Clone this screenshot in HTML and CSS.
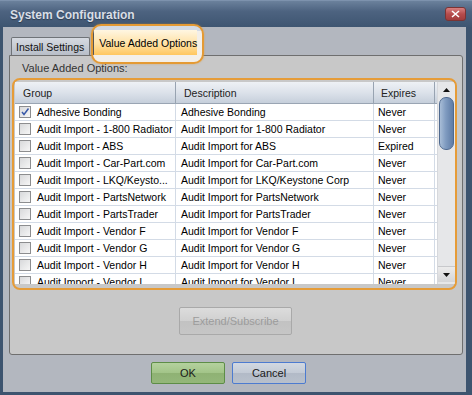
FILE: index.html
```html
<!DOCTYPE html>
<html lang="en">
<head>
  <meta charset="UTF-8" />
  <title>System Configuration</title>
  <link rel="stylesheet" href="styles.css">
</head>
<body>
  <div class="window">
    <div class="titlebar">
      <span class="title">System Configuration</span>
      <button class="close-btn" aria-label="Close">
        <svg width="9" height="8" viewBox="0 0 9 8"><path d="M1 1 L8 7 M8 1 L1 7" stroke="#fff" stroke-width="1.6"/></svg>
      </button>
    </div>

    <div class="client">
      <div class="tabs">
        <div class="tab">Install Settings</div>
        <div class="tab tab-active"><span>Value Added Options</span></div>
      </div>

      <div class="panel">
        <div class="panel-label">Value Added Options:</div>

        <div class="listbox">
          <div class="table">
            <div class="row head">
              <div class="cell">Group</div>
              <div class="cell">Description</div>
              <div class="cell">Expires</div>
              <div class="cell"></div>
            </div>
            <div class="rows">
              <div class="row">
                <div class="cell group"><span class="check checked"><svg width="10" height="10" viewBox="0 0 10 10"><path d="M2 5 L4 7.5 L8.5 1.5" fill="none" stroke="#3a5aa8" stroke-width="1.5"/></svg></span>Adhesive Bonding</div>
                <div class="cell">Adhesive Bonding</div>
                <div class="cell">Never</div>
                <div class="cell"></div>
              </div>
              <div class="row">
                <div class="cell group"><span class="check"></span>Audit Import - 1-800 Radiator</div>
                <div class="cell">Audit Import for 1-800 Radiator</div>
                <div class="cell">Never</div>
                <div class="cell"></div>
              </div>
              <div class="row">
                <div class="cell group"><span class="check"></span>Audit Import - ABS</div>
                <div class="cell">Audit Import for ABS</div>
                <div class="cell">Expired</div>
                <div class="cell"></div>
              </div>
              <div class="row">
                <div class="cell group"><span class="check"></span>Audit Import - Car-Part.com</div>
                <div class="cell">Audit Import for Car-Part.com</div>
                <div class="cell">Never</div>
                <div class="cell"></div>
              </div>
              <div class="row">
                <div class="cell group"><span class="check"></span>Audit Import - LKQ/Keysto...</div>
                <div class="cell">Audit Import for LKQ/Keystone Corp</div>
                <div class="cell">Never</div>
                <div class="cell"></div>
              </div>
              <div class="row">
                <div class="cell group"><span class="check"></span>Audit Import - PartsNetwork</div>
                <div class="cell">Audit Import for PartsNetwork</div>
                <div class="cell">Never</div>
                <div class="cell"></div>
              </div>
              <div class="row">
                <div class="cell group"><span class="check"></span>Audit Import - PartsTrader</div>
                <div class="cell">Audit Import for PartsTrader</div>
                <div class="cell">Never</div>
                <div class="cell"></div>
              </div>
              <div class="row">
                <div class="cell group"><span class="check"></span>Audit Import - Vendor F</div>
                <div class="cell">Audit Import for Vendor F</div>
                <div class="cell">Never</div>
                <div class="cell"></div>
              </div>
              <div class="row">
                <div class="cell group"><span class="check"></span>Audit Import - Vendor G</div>
                <div class="cell">Audit Import for Vendor G</div>
                <div class="cell">Never</div>
                <div class="cell"></div>
              </div>
              <div class="row">
                <div class="cell group"><span class="check"></span>Audit Import - Vendor H</div>
                <div class="cell">Audit Import for Vendor H</div>
                <div class="cell">Never</div>
                <div class="cell"></div>
              </div>
              <div class="row">
                <div class="cell group"><span class="check"></span>Audit Import - Vendor I</div>
                <div class="cell">Audit Import for Vendor I</div>
                <div class="cell">Never</div>
                <div class="cell"></div>
              </div>
            </div>
          </div>

          <div class="scrollbar">
            <div class="arrow"><svg width="7" height="4" viewBox="0 0 7 4"><path d="M0 4 L3.5 0 L7 4 Z" fill="#111"/></svg></div>
            <div class="track">
              <div class="thumb"></div>
            </div>
            <div class="arrow arrow-down"><svg width="7" height="4" viewBox="0 0 7 4"><path d="M0 0 L3.5 4 L7 0 Z" fill="#111"/></svg></div>
          </div>
        </div>

        <div class="panel-actions">
          <button class="btn btn-disabled" disabled>Extend/Subscribe</button>
        </div>
      </div>

      <div class="footer">
        <button class="btn btn-ok">OK</button>
        <button class="btn btn-cancel">Cancel</button>
      </div>
    </div>
  </div>
</body>
</html>
```

FILE: styles.css
```css
body {
  margin: 0;
  font-family: 'Liberation Sans', Arial, sans-serif;
  font-size: 10.5px;
  background: #3d546f;
}

.window {
  width: 472px;
  height: 395px;
  display: flex;
  flex-direction: column;
  background: #3d546f;
  overflow: hidden;
}

.titlebar {
  height: 27px;
  flex-shrink: 0;
  display: flex;
  align-items: center;
  justify-content: space-between;
  padding: 0 6px 0 10px;
  box-sizing: border-box;
  background: linear-gradient(#6b819c, #4d6380 40%, #3e5571);
  border-top: 1px solid #7d92ad;
}

.title {
  color: #d9dee6;
  font-size: 12px;
  font-weight: bold;
  text-shadow: 0 1px 1px rgba(0, 0, 0, 0.35);
  margin-top: 1px;
}

.close-btn {
  width: 21px;
  height: 14px;
  padding: 0;
  margin-top: -1px;
  border: 1px solid #7b3434;
  border-radius: 3px;
  background: linear-gradient(#d88080, #b64c4c 50%, #a23c3c);
  display: flex;
  align-items: center;
  justify-content: center;
}

.client {
  flex: 1;
  margin: 0 6px 3px 3px;
  padding: 0 3px 0 6px;
  background: #b3b7bf;
  display: flex;
  flex-direction: column;
}

.tabs {
  height: 28px;
  display: flex;
  align-items: flex-end;
  padding-left: 2px;
}

.tab {
  height: 18px;
  padding: 0 5px 0 4px;
  box-sizing: border-box;
  display: flex;
  align-items: center;
  color: #111;
  background: linear-gradient(#d6dae1, #b8bec8);
  border: 1px solid #6f7378;
  border-bottom: none;
  border-radius: 2px 2px 0 0;
}

.tab-active {
  position: relative;
  z-index: 1;
  height: 40px;
  width: 113px;
  margin-left: 1px;
  margin-bottom: -9px;
  padding: 0;
  align-items: stretch;
  border: 2px solid #e49a34;
  border-radius: 10px;
  background: linear-gradient(#d3dae4 0, #d3dae4 5px, #f3efe9 5px);
  box-shadow: 0 0 2px rgba(230, 150, 40, 0.6);
  overflow: hidden;
}

.tab-active span {
  display: flex;
  align-items: center;
  height: 25px;
  margin-top: 4px;
  padding-left: 5px;
  border-left: 1px solid #555;
  color: #000;
  background: linear-gradient(#fff6e2, #ffe2a6 55%, #ffc65e);
}

.panel {
  height: 300px;
  box-sizing: border-box;
  border: 1px solid #6f6f6f;
  border-radius: 0 3px 3px 3px;
  background: #c8c8c8;
  padding: 0 0 0 2px;
  display: flex;
  flex-direction: column;
}

.panel-label {
  color: #333;
  padding: 6px 0 0 10px;
  height: 22px;
  box-sizing: border-box;
  font-size: 11px;
}

.listbox {
  width: 445px;
  height: 212px;
  box-sizing: border-box;
  border: 2px solid #e69c38;
  border-radius: 8px;
  padding: 2px 0 4px 1px;
  display: flex;
  overflow: hidden;
  background: #c8c8c8;
}

.table {
  width: 423px;
  display: flex;
  flex-direction: column;
  background: #fff;
  overflow: hidden;
}

.rows {
  flex: 1;
  overflow: hidden;
}

.row {
  display: grid;
  grid-template-columns: 161px 198px 61px 1fr;
  height: 17px;
  box-sizing: border-box;
  border-bottom: 1px solid #d3dbe6;
  color: #000;
}

.cell {
  display: flex;
  align-items: center;
  padding-left: 4px;
  border-right: 1px solid #d3dbe6;
  white-space: nowrap;
  overflow: hidden;
}

.cell:nth-child(2) {
  padding-left: 5px;
}

.row.head {
  height: 22px;
  border-bottom: 1px solid #9aa5b3;
  background: linear-gradient(#eef1f5, #dce2ea 50%, #c6cfdb);
  color: #222;
}

.row.head .cell {
  padding-left: 8px;
  border-right: 1px solid #98a3b1;
}

.row.head .cell:nth-child(3) {
  padding-left: 7px;
}

.row.head .cell:last-child,
.row .cell:last-child {
  border-right: none;
}

.check {
  width: 12px;
  height: 12px;
  box-sizing: border-box;
  margin-right: 6px;
  flex-shrink: 0;
  border: 1px solid #8c8d8f;
  background: linear-gradient(135deg, #d8d9db, #f6f6f6);
  display: flex;
  align-items: center;
  justify-content: center;
}

.scrollbar {
  width: 17px;
  display: flex;
  flex-direction: column;
  background: #e6e7e9;
  border-left: 1px solid #d6d8dc;
}

.arrow {
  height: 15px;
  display: flex;
  align-items: center;
  justify-content: center;
}

.arrow-down {
  background: linear-gradient(#ececec, #d4d5d8);
  border-top: 1px solid #c8c9cc;
  margin-bottom: 2px;
}

.track {
  flex: 1;
  padding: 0 1px;
}

.thumb {
  height: 53px;
  box-sizing: border-box;
  border: 1px solid #4f6a90;
  border-radius: 7px;
  background: linear-gradient(90deg, #a8bdd7, #7f9bc0 45%, #5f7ca6);
}

.panel-actions {
  display: flex;
  justify-content: center;
  padding: 17px 3px 0 0;
}

.btn {
  font-family: 'Liberation Sans', Arial, sans-serif;
  font-size: 11px;
  border-radius: 2px;
  padding: 0;
  color: #1a1a1a;
}

.btn-disabled {
  width: 113px;
  height: 28px;
  color: #9c9c9c;
  border: 1px solid #a9a9a9;
  background: linear-gradient(#dcdcdc, #d0d0d0 50%, #c2c2c2 51%, #c6c6c6);
}

.footer {
  display: flex;
  gap: 7px;
  padding: 7px 0 0 142px;
}

.btn-ok,
.btn-cancel {
  width: 74px;
  height: 22px;
}

.btn-ok {
  border: 1px solid #5d8d47;
  background: linear-gradient(#b4d19e, #a2c488 50%, #8fb274 51%, #94b77a);
}

.btn-cancel {
  border: 1px solid #4c7bd0;
  background: linear-gradient(#d2d8e1, #c3cad5 50%, #b2bac7 51%, #b8c0cc);
}
```
